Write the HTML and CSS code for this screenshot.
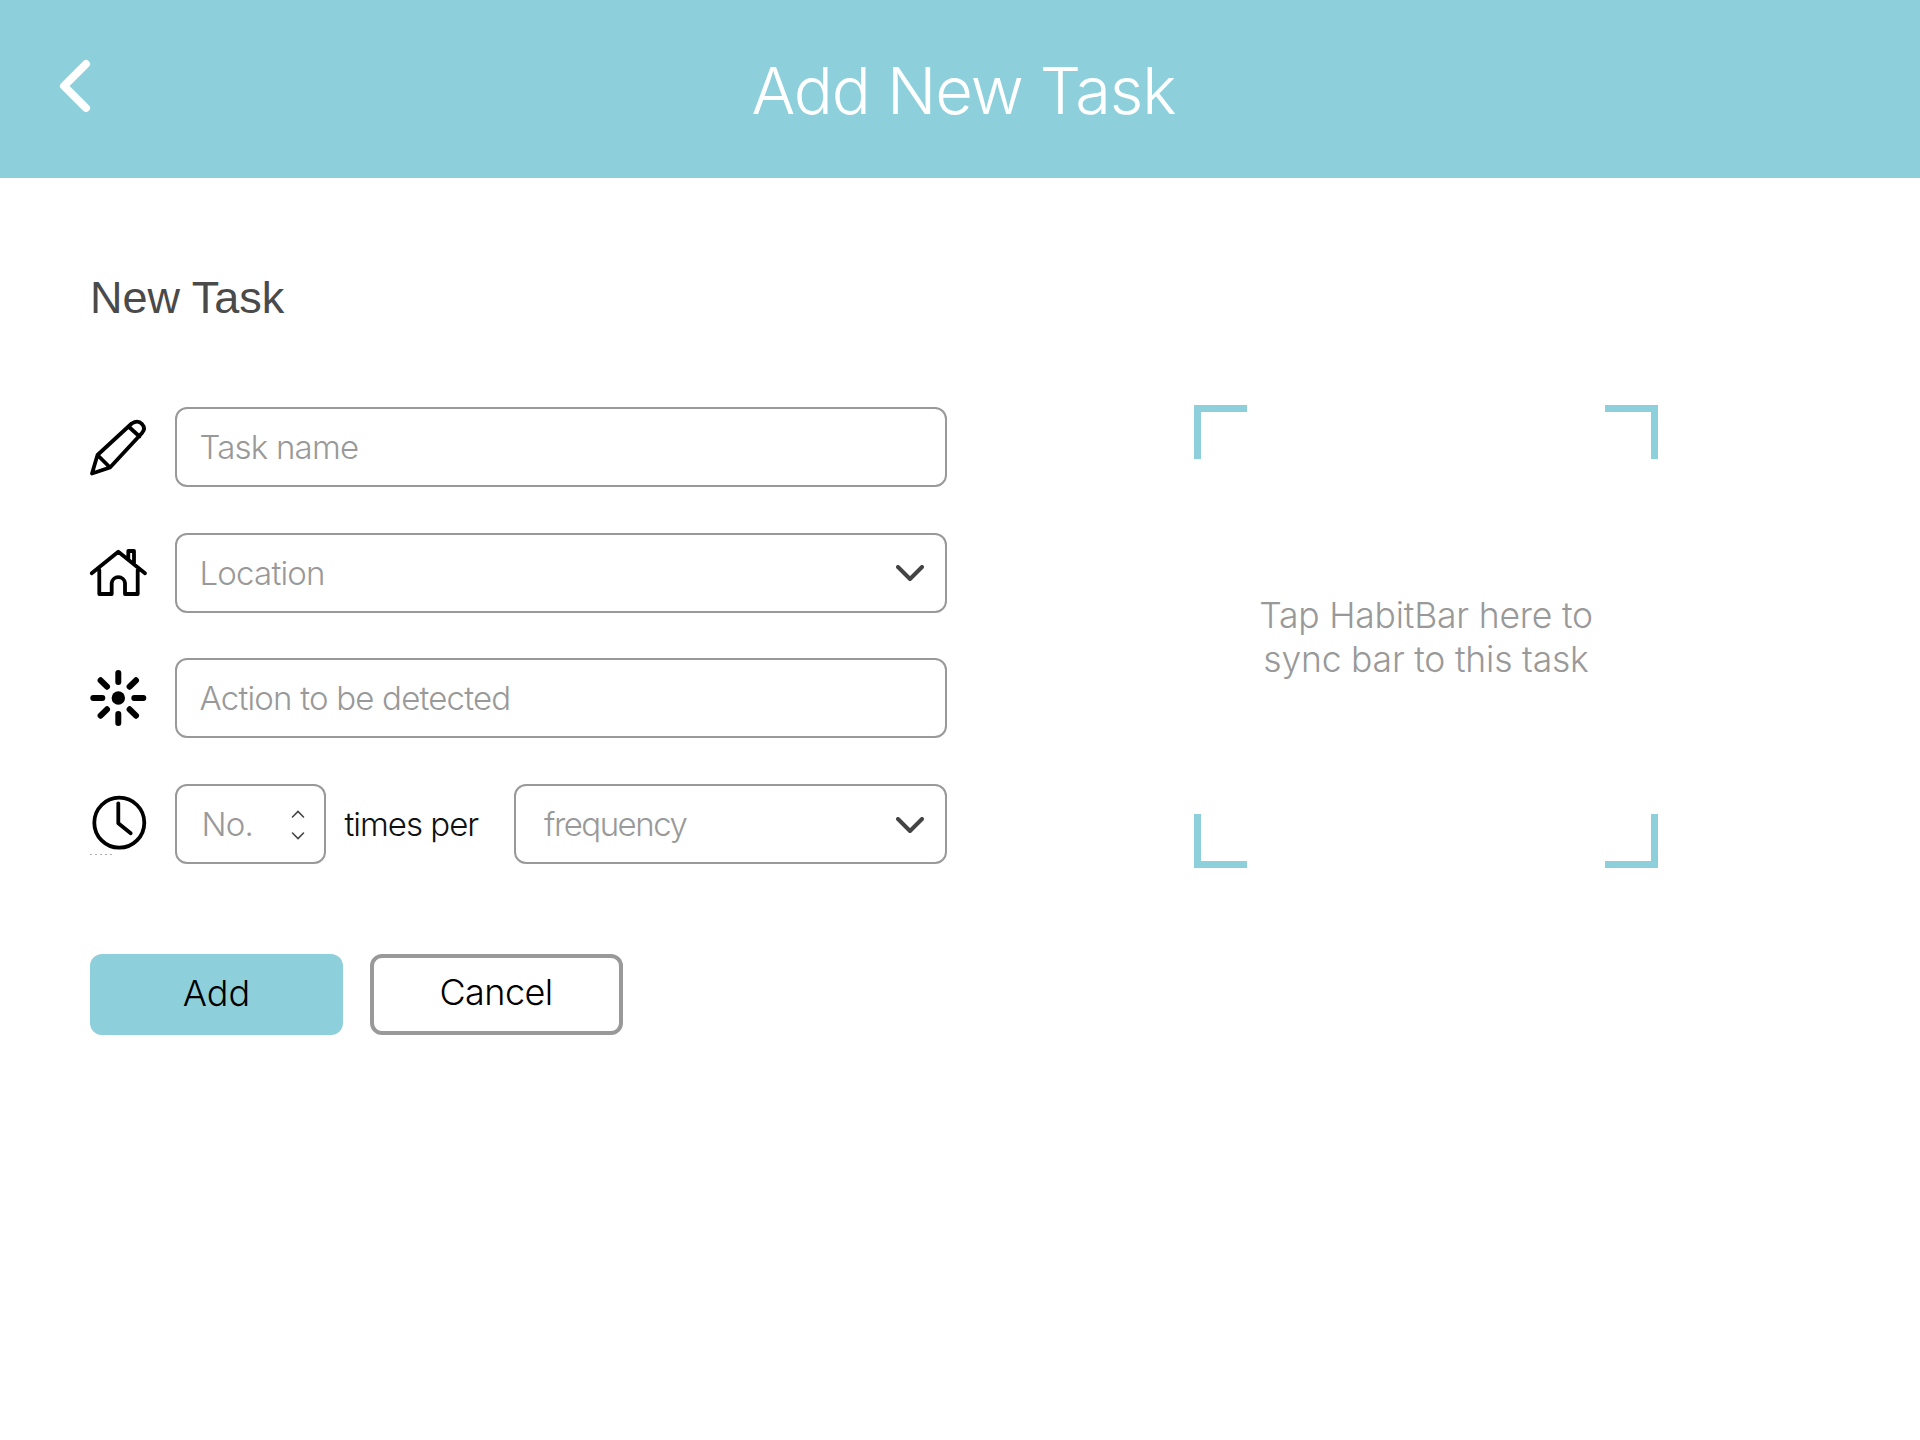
FILE: index.html
```html
<!DOCTYPE html>
<html lang="en">
    <head>
        <meta charset="UTF-8" />
        <meta name="viewport" content="width=device-width, initial-scale=1.0" />
        <title>Add New Task</title>
        <link rel="stylesheet" href="styles.css">
    </head>
    <body>
        <header class="topbar">
            <svg class="back" viewBox="0 0 40 60"><path d="M28 8 L6 30 L28 52" /></svg>
            <div class="topbar-title">Add New Task</div>
        </header>
        <main class="content">
            <div class="form-col">
                <h1 class="form-title">New Task</h1>
                <div class="rows">
                    <div class="row">
                        <svg class="icon" viewBox="0 0 60 60">
                            <path d="M9.5 38 L43.7 6.5 Q50 2.5 54 7 Q58 11.5 54 16 L22 50.5 L4 56.5 Z M40.5 9.5 L51.5 19.5 M9.5 38 L22 50.5" />
                        </svg>
                        <div class="field"><span class="hint">Task name</span></div>
                    </div>
                    <div class="row">
                        <svg class="icon" viewBox="0 0 60 60">
                            <path d="M3.7 30.3 L30.3 8.7 L57 30.3 M40.3 16 L40.3 8 L46 8 L46 21 M11.3 27 L11.3 51 L23.7 51 L23.7 40 A6.7 6.7 0 0 1 37 40 L37 51 L49.7 51 L49.7 27" />
                        </svg>
                        <div class="field"><span class="hint">Location</span>
                            <svg class="caret" viewBox="0 0 28 17"><path d="M2 2 L14 14 L26 2" /></svg>
                        </div>
                    </div>
                    <div class="row">
                        <svg class="icon sun" viewBox="0 0 60 60">
                            <circle class="dot" cx="30.3" cy="30" r="6.7" />
                            <path d="M30.3 5 V14 M30.3 46 V55 M5.3 30 H14.3 M46.3 30 H55.3 M12.6 12.3 L19 18.7 M41.6 41.3 L48 47.7 M48 12.3 L41.6 18.7 M19 41.3 L12.6 47.7" />
                        </svg>
                        <div class="field"><span class="hint">Action to be detected</span></div>
                    </div>
                    <div class="row">
                        <svg class="icon" viewBox="0 0 60 60">
                            <circle cx="31.3" cy="28.7" r="25" />
                            <path d="M30.3 9.3 V29.3 L42.7 39.3" />
                            <path class="speck" d="M2 60.5 H24" />
                        </svg>
                        <div class="field field-no"><span class="hint">No.</span>
                            <svg class="spin" viewBox="0 0 14 30"><path d="M1.5 7 L7 1.5 L12.5 7 M1.5 23 L7 28.5 L12.5 23" /></svg>
                        </div>
                        <span class="times">times per</span>
                        <div class="field field-freq"><span class="hint">frequency</span>
                            <svg class="caret" viewBox="0 0 28 17"><path d="M2 2 L14 14 L26 2" /></svg>
                        </div>
                    </div>
                </div>
                <div class="buttons">
                    <button class="btn btn-add">Add</button>
                    <button class="btn btn-cancel">Cancel</button>
                </div>
            </div>
            <div class="scan">
                <span class="corner tl"></span>
                <span></span>
                <span class="corner tr"></span>
                <div class="scan-text">Tap HabitBar here to<br>sync bar to this task</div>
                <span class="corner bl"></span>
                <span></span>
                <span class="corner br"></span>
            </div>
        </main>
    </body>
</html>
```

FILE: styles.css
```css
* {
    box-sizing: border-box;
}
body {
    margin: 0;
    background-color: #fff;
    font-family: "Inter", "Liberation Sans", sans-serif;
    font-weight: 300;
}
.topbar {
    height: 178px;
    background-color: #8dd0db;
    display: flex;
    align-items: center;
    justify-content: center;
    padding-left: 7px;
    position: relative;
}
.back {
    position: absolute;
    left: 58px;
    top: 56px;
    width: 40px;
    height: 60px;
    fill: none;
    stroke: #fff;
    stroke-width: 8;
    stroke-linecap: round;
    stroke-linejoin: round;
}
.topbar-title {
    color: #fff;
    font-size: 65px;
    letter-spacing: -1.1px;
    margin-top: 2px;
}
.content {
    display: flex;
    padding: 0 90px;
}
.form-col {
    width: 857px;
}
.form-title {
    margin: 92px 0 0;
    height: 137px;
    font-family: "Liberation Sans", sans-serif;
    font-size: 45px;
    font-weight: 400;
    line-height: 56px;
    color: #4a4a4a;
}
.rows {
    display: flex;
    flex-direction: column;
    gap: 45.7px;
}
.row {
    display: flex;
    align-items: center;
    height: 80px;
}
.icon {
    width: 60px;
    height: 60px;
    margin-left: -2px;
    margin-right: 26.5px;
    flex: none;
    overflow: visible;
    fill: none;
    stroke: #000;
    stroke-width: 3.8;
    stroke-linecap: round;
    stroke-linejoin: round;
}
.sun {
    stroke-width: 6;
}
.dot {
    fill: #000;
    stroke: none;
}
.speck {
    stroke: #aaa;
    stroke-width: 1;
    stroke-dasharray: 2 3;
    stroke-linecap: butt;
}
.field {
    flex: 1;
    height: 80px;
    border: 2px solid #999;
    border-radius: 12px;
    padding: 0 24px 0 23px;
    display: flex;
    align-items: center;
    justify-content: space-between;
}
.hint {
    font-size: 33px;
    color: #999;
    letter-spacing: -0.8px;
}
.caret {
    width: 28px;
    height: 17px;
    margin-top: 2px;
    margin-right: -3px;
    fill: none;
    stroke: #444;
    stroke-width: 4;
    stroke-linecap: round;
    stroke-linejoin: round;
}
.field-no {
    flex: none;
    width: 151px;
    padding-left: 25px;
    padding-right: 19px;
}
.spin {
    width: 14px;
    height: 30px;
    margin-top: 2px;
    fill: none;
    stroke: #444;
    stroke-width: 1.6;
    stroke-linecap: round;
}
.times {
    flex: 1;
    font-size: 33px;
    color: #111;
    margin-left: 19px;
    letter-spacing: -1px;
    white-space: nowrap;
}
.field-freq {
    flex: none;
    width: 433px;
    padding-left: 28px;
}
.field-freq .hint {
    letter-spacing: -1.5px;
}
.buttons {
    display: flex;
    gap: 27px;
    margin-top: 90px;
}
.btn {
    width: 253px;
    height: 81px;
    border-radius: 12px;
    font-family: inherit;
    font-weight: 300;
    font-size: 36px;
    color: #000;
    padding: 0 0 3px;
}
.btn-add {
    background-color: #8dd0db;
    border: none;
}
.btn-cancel {
    background-color: #fff;
    border: 4px solid #999;
    letter-spacing: -0.6px;
    padding-bottom: 5px;
    margin-left: -0.5px;
}
.scan {
    width: 464px;
    height: 463px;
    margin-top: 227px;
    margin-left: 247px;
    display: grid;
    grid-template-columns: 53px 1fr 53px;
    grid-template-rows: 54px 1fr 54px;
}
.corner {
    border: 0 solid #8dd0db;
}
.tl {
    border-width: 7px 0 0 7px;
}
.tr {
    border-width: 7px 7px 0 0;
}
.bl {
    border-width: 0 0 7px 7px;
}
.br {
    border-width: 0 7px 7px 0;
}
.scan-text {
    grid-column: 1 / 4;
    align-self: center;
    text-align: center;
    font-size: 35.5px;
    line-height: 44px;
    color: #999;
    letter-spacing: -0.2px;
    margin-top: 3px;
}
```
